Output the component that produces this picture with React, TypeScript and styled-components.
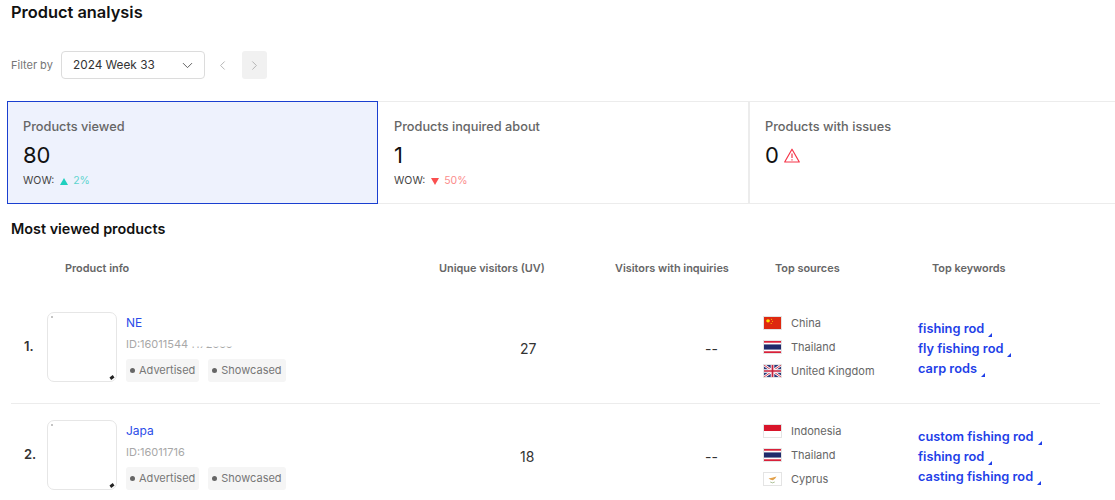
import { FC, ReactNode } from 'react'
import styled, { createGlobalStyle } from 'styled-components'
import { ChevronDown, ChevronLeft, ChevronRight } from 'lucide-react'

const Global = createGlobalStyle`
html, body { margin: 0; padding: 0; background: #fff; overflow: hidden; height: 500px; }
* { box-sizing: border-box; }
body { font-family: Inter, 'Liberation Sans', sans-serif; color: #111; }
`

const Page = styled.main`
  width: 1115px;
  height: 500px;
  overflow: hidden;
`
const Title = styled.h1`
  margin: 0;
  padding: 3px 0 0 11px;
  height: 51px;
  font-size: 16.4px;
  line-height: 19px;
  font-weight: 600;
  color: #111;
`
const FilterBar = styled.div`
  display: flex;
  align-items: center;
  height: 28px;
  padding-left: 11px;
`
const FilterLabel = styled.span`
  font-size: 11px;
  color: #767676;
  width: 50px;
`
const Select = styled.div`
  width: 144px;
  height: 28px;
  border: 1px solid #dcdcdc;
  border-radius: 4px;
  display: flex;
  align-items: center;
  justify-content: space-between;
  padding: 0 8px 0 11px;
  font-size: 11.8px;
  color: #333;
`
const PageButton = styled.div<{ $disabled?: boolean }>`
  width: 25px;
  height: 28px;
  border-radius: 3px;
  display: flex;
  align-items: center;
  justify-content: center;
  color: #b0b0b0;
  background: ${p => (p.$disabled ? '#f1f1f1' : 'transparent')};
  margin-left: ${p => (p.$disabled ? '7px' : '5px')};
`
const Cards = styled.section`
  display: grid;
  grid-template-columns: 371px 370px 372px;
  margin: 22px 0 0 7px;
  height: 103px;
`
const Card = styled.div<{ $active?: boolean; $edge?: boolean }>`
  padding: 17px ${p => (p.$active || p.$edge ? '15px' : '16px')} 0;
  border-style: solid;
  border-color: ${p => (p.$active ? '#1a3fd0' : '#ececec')};
  border-width: ${p => (p.$active ? '1px' : p.$edge ? '1px 0 1px 2px' : '1px 0')};
  background: ${p => (p.$active ? '#eef2fd' : '#fff')};
`
const CardTitle = styled.div`
  font-size: 12.75px;
  line-height: 15px;
  font-weight: 500;
  color: #666;
`
const CardValue = styled.div`
  display: flex;
  align-items: center;
  gap: 5px;
  margin-top: 8px;
  font-size: 22px;
  line-height: 27px;
  color: #111;
`
const Wow = styled.div`
  display: flex;
  align-items: center;
  margin-top: 5px;
  font-size: 10.5px;
  line-height: 14px;
  color: #444;
`
const Delta = styled.span<{ $up?: boolean }>`
  color: ${p => (p.$up ? '#5fd4cf' : '#fb8c8c')};
  margin-left: 5px;
`
const Arrow = styled.span<{ $up?: boolean }>`
  width: 0;
  height: 0;
  margin-left: 6px;
  border-left: 4.5px solid transparent;
  border-right: 4.5px solid transparent;
  ${p =>
    p.$up ? 'border-bottom: 7px solid #1fd0bf;' : 'border-top: 7px solid #fa4f4f;'}
`
const SectionTitle = styled.h2`
  margin: 0;
  padding: 17px 0 0 11px;
  height: 47px;
  font-size: 14.4px;
  line-height: 16px;
  font-weight: 600;
  color: #111;
`
const Grid = styled.div`
  display: grid;
  grid-template-columns: 419px 170px 150px 155px 195px;
  margin-left: 11px;
  width: 1089px;
`
const Head = styled(Grid)`
  height: 45px;
  padding-bottom: 11px;
  align-items: center;
`
const HeadCell = styled.div<{ $pad: number }>`
  padding-left: ${p => p.$pad}px;
  font-size: 10.9px;
  font-weight: 600;
  color: #666;
  white-space: nowrap;
`
const Row = styled(Grid)`
  padding: 16px 0 21px;
  border-bottom: 1px solid #ececec;
  height: 108px;
  align-items: center;
  &:last-child { border-bottom-color: transparent; }
`
const Info = styled.div`
  display: flex;
  align-items: center;
`
const Rank = styled.div`
  width: 36px;
  padding: 0 0 2px 13px;
  font-size: 13px;
  font-weight: 600;
  color: #333;
`
const Thumb = styled.div`
  position: relative;
  width: 70px;
  height: 70px;
  border: 1px solid #e6e6e6;
  border-radius: 7px;
  margin-right: 9px;
  background: #fff;
`
const Speck = styled.span<{ $corner: 'tl' | 'br' }>`
  position: absolute;
  ${p =>
    p.$corner === 'tl'
      ? 'left: 3px; top: 3px; width: 2px; height: 2px; background: #c4c4c4;'
      : 'right: 2px; bottom: 2px; width: 4px; height: 3px; background: #222; transform: rotate(-35deg);'}
`
const Meta = styled.div`
  display: flex;
  flex-direction: column;
`
const Name = styled.a`
  margin-top: 2px;
  white-space: nowrap;
  font-size: 12px;
  line-height: 15px;
  color: #2b4ce8;
`
const Id = styled.div`
  margin-top: 8px;
  font-size: 11px;
  line-height: 13px;
  color: #a8a8a8;
`
const IdRest = styled.span`
  clip-path: inset(72% 0 0 0);
`
const Tags = styled.div`
  display: flex;
  gap: 9px;
  margin-top: 8px;
`
const Tag = styled.span`
  display: inline-flex;
  align-items: center;
  gap: 4px;
  height: 23px;
  padding: 0 4px;
  border-radius: 3px;
  background: #f5f5f5;
  font-size: 11px;
  color: #777;
  &::before {
    content: '';
    width: 5px;
    height: 5px;
    border-radius: 50%;
    background: #666;
  }
`
const Metric = styled.div<{ $pad: number }>`
  padding: 3px 0 0 ${p => p.$pad}px;
  font-size: 14px;
  color: #333;
`
const List = styled.div<{ $gap: number; $pad: number; $top: number }>`
  display: flex;
  flex-direction: column;
  gap: ${p => p.$gap}px;
  padding-left: ${p => p.$pad}px;
  margin-top: ${p => p.$top}px;
`
const Source = styled.div`
  display: flex;
  align-items: center;
  gap: 9px;
  height: 14px;
  font-size: 11px;
  color: #666;
  white-space: nowrap;
`
const FlagBox = styled.svg`
  display: block;
  width: 19px;
  height: 14px;
  border: 1px solid #e4e4e4;
`
const Keyword = styled.a`
  display: flex;
  align-items: flex-end;
  gap: 4px;
  height: 16px;
  font-size: 12.8px;
  line-height: 16px;
  font-weight: 600;
  color: #1f3fe8;
  white-space: nowrap;
  &::after {
    content: '';
    width: 0;
    height: 0;
    border-left: 4px solid transparent;
    border-bottom: 4px solid #1f3fe8;
  }
`

type FlagCode = 'cn' | 'th' | 'gb' | 'id' | 'cy'

const Flag: FC<{ code: FlagCode }> = ({ code }) => {
  let art: ReactNode = null
  if (code === 'cn') {
    art = (
      <>
        <rect width="19" height="14" fill="#de2910" />
        <circle cx="4.5" cy="4.5" r="2" fill="#ffde00" />
        <circle cx="8.5" cy="2.5" r=".6" fill="#ffde00" />
        <circle cx="9.5" cy="5" r=".6" fill="#ffde00" />
        <circle cx="8" cy="7.5" r=".6" fill="#ffde00" />
      </>
    )
  } else if (code === 'th') {
    art = (
      <>
        <rect width="19" height="14" fill="#fff" />
        <rect width="19" height="2" fill="#d8203a" />
        <rect y="12" width="19" height="2" fill="#d8203a" />
        <rect y="4" width="19" height="6" fill="#1f2a6b" />
      </>
    )
  } else if (code === 'gb') {
    art = (
      <>
        <rect width="19" height="14" fill="#2b3a7a" />
        <path d="M0 0L19 14M19 0L0 14" stroke="#fff" strokeWidth="3" />
        <path d="M0 0L19 14M19 0L0 14" stroke="#c8223c" strokeWidth="1" />
        <path d="M9.5 0V14M0 7H19" stroke="#fff" strokeWidth="4" />
        <path d="M9.5 0V14M0 7H19" stroke="#c8223c" strokeWidth="2" />
      </>
    )
  } else if (code === 'id') {
    art = (
      <>
        <rect width="19" height="14" fill="#fff" />
        <rect width="19" height="7" fill="#d8142a" />
      </>
    )
  } else {
    art = (
      <>
        <rect width="19" height="14" fill="#fff" />
        <path d="M5 6.5L9 5.5L14 4L12.5 6.5L10 8.5L7.5 8Z" fill="#e2a04a" />
        <path d="M7 10.5L9.5 11.5L12 10.5" stroke="#8aa56a" strokeWidth=".8" fill="none" />
      </>
    )
  }
  return (
    <FlagBox viewBox="0 0 19 14" preserveAspectRatio="none">
      {art}
    </FlagBox>
  )
}

const WarningIcon = () => (
  <svg width="16" height="15" viewBox="0 0 16 15" fill="none">
    <path d="M8 1.2L15.3 14H.7L8 1.2Z" stroke="#f5364a" strokeWidth="1.2" strokeLinejoin="round" />
    <path d="M8 5.5V10M8 11.2V12.4" stroke="#f5364a" strokeWidth="1.2" />
  </svg>
)

const products = [
  {
    rank: '1.',
    name: 'NE',
    id: 'ID:16011544',
    idRest: '4172555',
    uv: '27',
    sources: [
      { code: 'cn' as FlagCode, label: 'China' },
      { code: 'th' as FlagCode, label: 'Thailand' },
      { code: 'gb' as FlagCode, label: 'United Kingdom' },
    ],
    keywords: ['fishing rod', 'fly fishing rod', 'carp rods'],
  },
  {
    rank: '2.',
    name: 'Japa',
    id: 'ID:16011716',
    idRest: '',
    uv: '18',
    sources: [
      { code: 'id' as FlagCode, label: 'Indonesia' },
      { code: 'th' as FlagCode, label: 'Thailand' },
      { code: 'cy' as FlagCode, label: 'Cyprus' },
    ],
    keywords: ['custom fishing rod', 'fishing rod', 'casting fishing rod'],
  },
]

export default function App() {
  return (
    <Page>
      <Global />
      <Title>Product analysis</Title>
      <FilterBar>
        <FilterLabel>Filter by</FilterLabel>
        <Select>
          2024 Week 33
          <ChevronDown size={17} strokeWidth={1.3} color="#555" />
        </Select>
        <PageButton>
          <ChevronLeft size={15} strokeWidth={1.5} />
        </PageButton>
        <PageButton $disabled>
          <ChevronRight size={15} strokeWidth={1.5} />
        </PageButton>
      </FilterBar>
      <Cards>
        <Card $active>
          <CardTitle>Products viewed</CardTitle>
          <CardValue>80</CardValue>
          <Wow>
            WOW:<Arrow $up /><Delta $up>2%</Delta>
          </Wow>
        </Card>
        <Card>
          <CardTitle>Products inquired about</CardTitle>
          <CardValue>1</CardValue>
          <Wow>
            WOW:<Arrow /><Delta>50%</Delta>
          </Wow>
        </Card>
        <Card $edge>
          <CardTitle>Products with issues</CardTitle>
          <CardValue>
            0<WarningIcon />
          </CardValue>
        </Card>
      </Cards>
      <SectionTitle>Most viewed products</SectionTitle>
      <Head>
        <HeadCell $pad={54}>Product info</HeadCell>
        <HeadCell $pad={9}>Unique visitors (UV)</HeadCell>
        <HeadCell $pad={15}>Visitors with inquiries</HeadCell>
        <HeadCell $pad={25}>Top sources</HeadCell>
        <HeadCell $pad={27}>Top keywords</HeadCell>
      </Head>
      {products.map(p => (
        <Row key={p.rank}>
          <Info>
            <Rank>{p.rank}</Rank>
            <Thumb>
              <Speck $corner="tl" />
              <Speck $corner="br" />
            </Thumb>
            <Meta>
              <Name>{p.name}</Name>
              <Id>
                {p.id}
                {p.idRest && <IdRest>{p.idRest}</IdRest>}
              </Id>
              <Tags>
                <Tag>Advertised</Tag>
                <Tag>Showcased</Tag>
              </Tags>
            </Meta>
          </Info>
          <Metric $pad={90}>{p.uv}</Metric>
          <Metric $pad={105}>--</Metric>
          <List $gap={10} $pad={13} $top={0}>
            {p.sources.map(s => (
              <Source key={s.label}>
                <Flag code={s.code} />
                {s.label}
              </Source>
            ))}
          </List>
          <List $gap={4} $pad={13} $top={4}>
            {p.keywords.map(k => (
              <Keyword key={k}>{k}</Keyword>
            ))}
          </List>
        </Row>
      ))}
    </Page>
  )
}
